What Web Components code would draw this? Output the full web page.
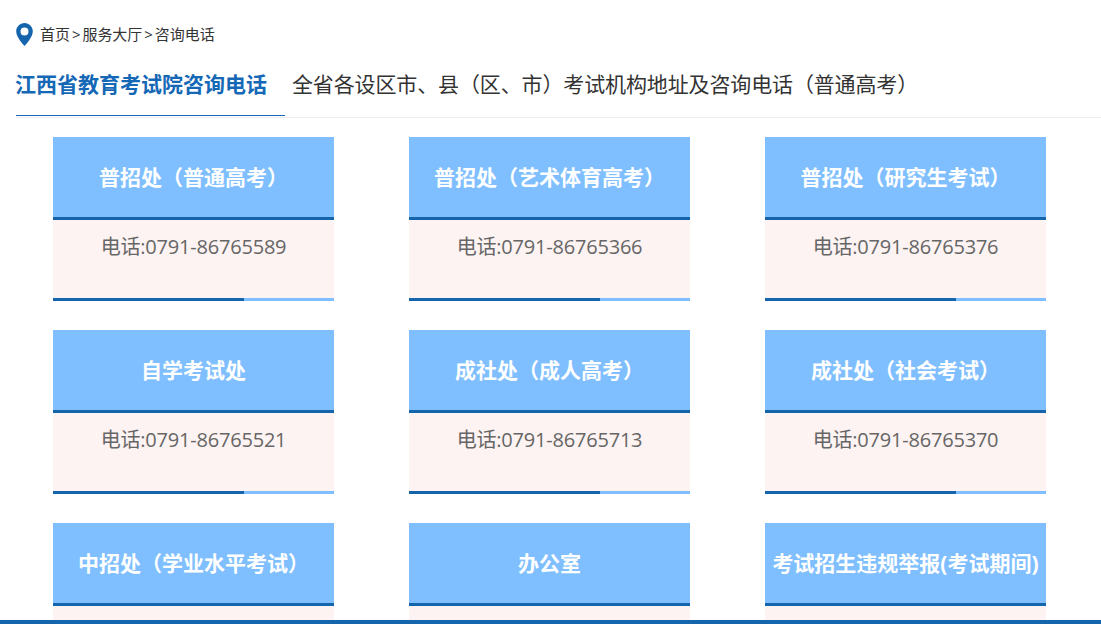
<!DOCTYPE html>
<html lang="zh">
<head>
<meta charset="utf-8">
<title>咨询电话</title>
<style>
  html, body { margin: 0; height: 624px; overflow: hidden; background: #fff; }
  body { font-family: "Open Sans", "Noto Sans CJK SC", sans-serif; }
</style>
</head>
<body>
<contact-page>
  <bread-crumb slot="crumb">首页<i>&gt;</i>服务大厅<i>&gt;</i>咨询电话</bread-crumb>
  <tab-bar slot="tabs">
    <tab-item active>江西省教育考试院咨询电话</tab-item>
    <tab-item>全省各设区市、县（区、市）考试机构地址及咨询电话（普通高考）</tab-item>
  </tab-bar>
  <phone-card title-text="普招处（普通高考）" phone="0791-86765589"></phone-card>
  <phone-card title-text="普招处（艺术体育高考）" phone="0791-86765366"></phone-card>
  <phone-card title-text="普招处（研究生考试）" phone="0791-86765376"></phone-card>
  <phone-card title-text="自学考试处" phone="0791-86765521"></phone-card>
  <phone-card title-text="成社处（成人高考）" phone="0791-86765713"></phone-card>
  <phone-card title-text="成社处（社会考试）" phone="0791-86765370"></phone-card>
  <phone-card title-text="中招处（学业水平考试）" phone=""></phone-card>
  <phone-card title-text="办公室" phone=""></phone-card>
  <phone-card title-text="考试招生违规举报(考试期间)" phone=""></phone-card>
</contact-page>

<script>
// breadcrumb row with the map pin
class BreadCrumb extends HTMLElement {
    constructor() {
        super();
        this.attachShadow({ mode: 'open' });
        this.shadowRoot.innerHTML = `
            <style>
                :host { display: flex; align-items: center; gap: 6px; height: 24px; font-size: 15px; letter-spacing: -0.05px; color: #333; }
                svg { display: block; flex: none; margin-top: 3px; }
                ::slotted(i) { font-style: normal; padding: 0 2px; }
            </style>
            <svg width="18" height="23" viewBox="1 0 18 23">
                <path fill="#1565ad" fill-rule="evenodd" d="M9.500 0C4.900 0 1.200 3.700 1.200 8.300c0 2.900 1.600 6 3.400 8.700 1.700 2.500 3.600 4.600 4.900 6 1.300-1.400 3.200-3.500 4.900-6 1.800-2.700 3.400-5.800 3.400-8.700C17.800 3.700 14.100 0 9.500 0zm0 4.500a4 4 0 1 1 0 8 4 4 0 0 1 0-8z"/>
            </svg>
            <span><slot></slot></span>
        `;
    }
}
customElements.define('bread-crumb', BreadCrumb);

class TabBar extends HTMLElement {
    constructor() {
        super();
        this.attachShadow({ mode: 'open' });
        this.shadowRoot.innerHTML = `
            <style>
                :host { display: flex; height: 53px; border-bottom: 1px solid #eee; }
            </style>
            <slot></slot>
        `;
    }
}
customElements.define('tab-bar', TabBar);

class TabItem extends HTMLElement {
    constructor() {
        super();
        this.attachShadow({ mode: 'open' });
        this.shadowRoot.innerHTML = `
            <style>
                :host { display: block; height: 52px; line-height: 41px; font-size: 21px; letter-spacing: -0.13px; color: #333; box-sizing: border-box; white-space: nowrap; margin-left: 7px; }
                :host([active]) { font-weight: 700; letter-spacing: 0; color: #1568b5; border-bottom: 1px solid #1568b5; margin-left: 0; width: 269px; text-indent: -1px; }
            </style>
            <slot></slot>
        `;
    }
}
customElements.define('tab-item', TabItem);

class PhoneCard extends HTMLElement {
    constructor() {
        super();
        this.attachShadow({ mode: 'open' });
    }

    connectedCallback() {
        const title = this.getAttribute('title-text');
        const phone = this.getAttribute('phone');
        this.shadowRoot.innerHTML = `
            <style>
                :host { display: block; height: 164px; }
                .head {
                    height: 80px;
                    background: #7fbfff;
                    color: #fff;
                    font-size: 21px;
                    font-weight: 700;
                    line-height: 80px;
                    text-align: center;
                    white-space: nowrap;
                    border-bottom: 3px solid #1565ad;
                }
                .body {
                    height: 78px;
                    background: #fdf3f2;
                    color: #666;
                    font-size: 20px;
                    letter-spacing: -0.2px;
                    line-height: 54px;
                    text-align: center;
                }
                .foot { height: 3px; background: #7fbfff; }
                .foot div { width: 191px; height: 100%; background: #1565ad; }
            </style>
            <div class="head">${title}</div>
            <div class="body">${phone ? '电话:' + phone : ''}</div>
            <div class="foot"><div></div></div>
        `;
    }
}
customElements.define('phone-card', PhoneCard);

class ContactPage extends HTMLElement {
    constructor() {
        super();
        this.attachShadow({ mode: 'open' });
        this.shadowRoot.innerHTML = `
            <style>
                :host { display: block; height: 624px; overflow: hidden; position: relative; }
                .top { padding: 21px 0 0 16px; }
                .crumb-gap { height: 19px; }
                .grid {
                    display: grid;
                    grid-template-columns: repeat(3, 281px);
                    column-gap: 75px;
                    row-gap: 29px;
                    padding: 19px 0 0 53px;
                }
                .bottom-bar { position: absolute; left: 0; right: 0; bottom: 0; height: 4px; background: #1565ad; }
            </style>
            <div class="top">
                <slot name="crumb"></slot>
                <div class="crumb-gap"></div>
                <slot name="tabs"></slot>
            </div>
            <div class="grid"><slot></slot></div>
            <div class="bottom-bar"></div>
        `;
    }
}
customElements.define('contact-page', ContactPage);
</script>
</body>
</html>
